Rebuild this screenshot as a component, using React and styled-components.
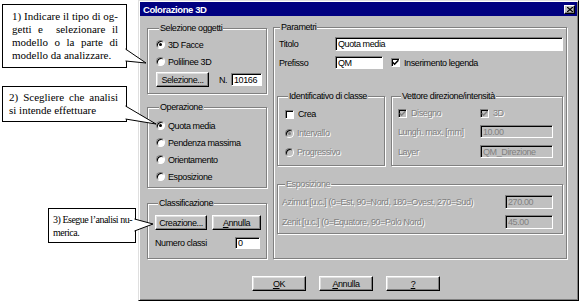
import React from 'react';
import styled, { createGlobalStyle } from 'styled-components';

const GlobalStyle = createGlobalStyle`
  html, body {
    margin: 0;
    padding: 0;
    background: #fff;
  }
  body {
    font-family: "Liberation Sans Narrow", "Arial Narrow", "Liberation Sans", Arial, sans-serif;
    font-size: 9px;
    letter-spacing: -0.4px;
    color: #000;
  }
`;

const Page = styled.div`
  display: flex;
  width: 579px;
  height: 303px;
  overflow: hidden;
  background: #fff;
`;

/* ---------- callouts on the left ---------- */

const Notes = styled.div`
  width: 138px;
  flex-shrink: 0;
  display: flex;
  flex-direction: column;
  align-items: flex-start;
  padding-top: 4px;
  box-sizing: border-box;
`;

const Callout = styled.div`
  position: relative;
  box-sizing: border-box;
  width: ${p => p.$w}px;
  margin: ${p => p.$top}px 0 0 ${p => p.$left}px;
  padding: ${p => p.$pad};
  border: 1px solid #000;
  background: #fff;
  font-family: "Liberation Serif", "Times New Roman", serif;
  font-size: ${p => p.$fs || 11}px;
  letter-spacing: ${p => p.$ls || 0}px;
  line-height: 13px;
  color: #000;
`;

const NoteLine = styled.div`
  white-space: nowrap;
  text-align: justify;
  text-align-last: ${p => (p.$last ? 'left' : 'justify')};
`;

const Wedge = styled.svg`
  position: absolute;
  left: calc(100% - 1px);
  top: ${p => p.$top}px;
  z-index: 5;
  overflow: visible;
`;

const Pointer = ({ top, b0, b1, tx, ty }) => (
  <Wedge $top={top} width={tx + 2} height={Math.max(b1, ty) + 2}>
    <polygon points={`0,${b0} ${tx},${ty} 0,${b1}`} fill="#fff" />
    <polyline
      points={`0.5,${b0} ${tx},${ty} 0.5,${b1}`}
      fill="none"
      stroke="#000"
      strokeWidth="1"
    />
  </Wedge>
);

/* ---------- dialog ---------- */

const Dialog = styled.div`
  width: 441px;
  height: 301px;
  box-sizing: border-box;
  flex-shrink: 0;
  background: #c0c0c0;
  border: 1px solid;
  border-color: #dfdfdf #000 #000 #dfdfdf;
  box-shadow: inset 1px 1px #fff, inset -1px -1px #808080;
  padding: 1px;
  display: flex;
  flex-direction: column;
`;

const TitleBar = styled.div`
  height: 14px;
  background: #000080;
  color: #fff;
  font-weight: bold;
  font-size: 9.5px;
  display: flex;
  align-items: center;
  justify-content: space-between;
  padding: 0 2px 0 3px;
`;

const CloseBox = styled.span`
  width: 11px;
  height: 9px;
  box-sizing: border-box;
  background: #c0c0c0;
  border: 1px solid;
  border-color: #fff #000 #000 #fff;
  box-shadow: inset -1px -1px #808080;
  display: flex;
  align-items: center;
  justify-content: center;
`;

const Body = styled.div`
  display: flex;
  align-items: flex-start;
  gap: 6px;
  padding: 6px 0 0 7px;
`;

const Column = styled.div`
  display: flex;
  flex-direction: column;
  width: ${p => p.$w}px;
  margin-top: ${p => p.$mt || 0}px;
`;

const Group = styled.fieldset`
  box-sizing: border-box;
  margin: ${p => p.$mt || 0}px 0 0 0;
  padding: ${p => p.$pad};
  min-width: 0;
  width: ${p => (p.$w ? `${p.$w}px` : 'auto')};
  height: ${p => p.$h}px;
  border: 1px solid #808080;
  box-shadow: inset 1px 1px #fff, 1px 1px #fff;
  display: flex;
  flex-direction: column;
`;

const Legend = styled.legend`
  padding: 0 1px;
  margin-left: 3px;
  line-height: 10px;
  white-space: nowrap;
  background: #c0c0c0;
  color: ${p => (p.$off ? '#808080' : '#000')};
  text-shadow: ${p => (p.$off ? '1px 1px 0 #fff' : 'none')};
`;

const Row = styled.div`
  display: flex;
  align-items: center;
  height: ${p => p.$h || 14}px;
  margin-top: ${p => p.$mt || 0}px;
  gap: ${p => p.$gap || 0}px;
`;

const SplitRow = styled.div`
  display: flex;
  gap: 6px;
  margin-top: ${p => p.$mt || 0}px;
`;

const Label = styled.span`
  display: inline-block;
  white-space: nowrap;
  width: ${p => (p.$w ? `${p.$w}px` : 'auto')};
  flex: ${p => (p.$grow ? 1 : 'none')};
  padding-left: ${p => p.$pl || 0}px;
  margin-left: ${p => p.$ml || 0}px;
  box-sizing: border-box;
  color: ${p => (p.$off ? '#808080' : '#000')};
  text-shadow: ${p => (p.$off ? '1px 1px 0 #fff' : 'none')};
`;

const Field = styled.input`
  box-sizing: border-box;
  width: ${p => p.$w}px;
  height: ${p => p.$h || 14}px;
  margin: 0;
  padding: 0 0 0 2px;
  font: inherit;
  letter-spacing: inherit;
  color: ${p => (p.$off ? '#808080' : '#000')};
  background: ${p => (p.$off ? '#c0c0c0' : '#fff')};
  border: 1px solid;
  border-color: #808080 #fff #fff #808080;
  box-shadow: inset 1px 1px #000;
  outline: none;
`;

const Button = styled.button`
  box-sizing: border-box;
  width: ${p => p.$w}px;
  height: 15px;
  margin: 0;
  padding: 0;
  font: inherit;
  letter-spacing: inherit;
  color: #000;
  background: #c0c0c0;
  border: 1px solid;
  border-color: #fff #000 #000 #fff;
  box-shadow: inset -1px -1px #808080, inset 1px 1px #dfdfdf;
`;

const RadioMark = styled.span`
  position: relative;
  width: 9px;
  height: 9px;
  flex: none;
  box-sizing: border-box;
  border-radius: 50%;
  background: ${p => (p.$off ? '#c0c0c0' : '#fff')};
  border: 1px solid;
  border-color: #808080 #fff #fff #808080;
  box-shadow: inset 1px 1px #000;
  margin-right: 3px;
  &::after {
    content: '';
    display: ${p => (p.$on ? 'block' : 'none')};
    position: absolute;
    left: 2px;
    top: 2px;
    width: 3px;
    height: 3px;
    border-radius: 50%;
    background: ${p => (p.$off ? '#808080' : '#000')};
  }
`;

const BoxMark = styled.span`
  width: 9px;
  height: 9px;
  flex: none;
  box-sizing: border-box;
  background: ${p => (p.$off ? '#c0c0c0' : '#fff')};
  border: 1px solid;
  border-color: #808080 #fff #fff #808080;
  box-shadow: inset 1px 1px #000;
  display: flex;
  align-items: center;
  justify-content: center;
  margin-left: ${p => p.$ml || 0}px;
  margin-right: 4px;
`;

const Footer = styled.div`
  display: flex;
  gap: 13px;
  margin-top: 17px;
  padding-left: 112px;
`;

const Radio = ({ on, off, children }) => (
  <Row $h={17}>
    <RadioMark $on={on} $off={off} />
    <Label $off={off}>{children}</Label>
  </Row>
);

const CheckBox = ({ on, off, ml }) => (
  <BoxMark $off={off} $ml={ml}>
    {on && (
      <svg width="7" height="7" viewBox="0 0 7 7">
        <path
          d="M0.7 3.2 L2.6 5.2 L6.4 1.2"
          fill="none"
          stroke={off ? '#808080' : '#000'}
          strokeWidth="1.5"
        />
      </svg>
    )}
  </BoxMark>
);

export default function App() {
  return (
    <>
      <GlobalStyle />
      <Page>
        <Notes>
          <Callout $w={125} $top={0} $left={2} $pad="5px 8px 5px 9px">
            <NoteLine>1) Indicare il tipo di og-</NoteLine>
            <NoteLine>getti e&nbsp; selezionare il</NoteLine>
            <NoteLine>modello o la parte di</NoteLine>
            <NoteLine $last>modello da analizzare.</NoteLine>
            <Pointer top={40} b0={4} b1={16} tx={21} ty={18} />
          </Callout>
          <Callout $w={125} $top={18} $left={2} $pad="4px 8px 4px 6px">
            <NoteLine>2) Scegliere che analisi</NoteLine>
            <NoteLine $last>si intende effettuare</NoteLine>
            <Pointer top={15} b0={4} b1={17} tx={31} ty={22} />
          </Callout>
          <Callout $w={88} $top={86} $left={48} $pad="4px 3px 3px 4px" $fs={10} $ls={-0.5}>
            <NoteLine>3) Esegue l’analisi nu-</NoteLine>
            <NoteLine $last>merica.</NoteLine>
            <Pointer top={6} b0={4} b1={16} tx={19} ty={9} />
          </Callout>
        </Notes>

        <Dialog>
          <TitleBar>
            <span>Colorazione 3D</span>
            <CloseBox>
              <svg width="6" height="5" viewBox="0 0 6 5">
                <path d="M0 0 L6 5 M6 0 L0 5" stroke="#000" strokeWidth="1.3" />
              </svg>
            </CloseBox>
          </TitleBar>

          <Body>
            <Column $w={120} $mt={1}>
              <Group $h={71} $pad="3px 0 0 8px">
                <Legend>Selezione oggetti</Legend>
                <Radio on>3D Facce</Radio>
                <Radio>Polilinee 3D</Radio>
                <Row $h={15} $mt={2}>
                  <Button $w={53}>Selezione...</Button>
                  <Label $ml={10} $w={12}>N.</Label>
                  <Field $w={31} $h={13} readOnly value="10166" />
                </Row>
              </Group>

              <Group $mt={8} $h={86} $pad="5px 0 0 8px">
                <Legend>Operazione</Legend>
                <Radio on>Quota media</Radio>
                <Radio>Pendenza massima</Radio>
                <Radio>Orientamento</Radio>
                <Radio>Esposizione</Radio>
              </Group>

              <Group $mt={10} $h={61} $pad="7px 0 0 7px">
                <Legend>Classificazione</Legend>
                <Row $h={15} $gap={5}>
                  <Button $w={52}>Creazione...</Button>
                  <Button $w={49}><u>A</u>nnulla</Button>
                </Row>
                <Row $h={14} $mt={6}>
                  <Label $w={80}>Numero classi</Label>
                  <Field $w={25} $h={12} readOnly value="0" />
                </Row>
              </Group>
            </Column>

            <Group $w={294} $h={237} $pad="5px 3px 0 3px">
              <Legend>Parametri</Legend>
              <Row $h={14}>
                <Label $w={58} $pl={2}>Titolo</Label>
                <Field $w={228} $h={14} readOnly value="Quota media" />
              </Row>
              <Row $h={13} $mt={5}>
                <Label $w={58} $pl={2}>Prefisso</Label>
                <Field $w={48} $h={13} readOnly value="QM" />
                <CheckBox on ml={8} />
                <Label>Inserimento legenda</Label>
              </Row>

              <SplitRow $mt={22}>
                <Group $w={108} $h={75} $pad="6px 0 0 7px">
                  <Legend>Identificativo di classe</Legend>
                  <Row $h={14}>
                    <CheckBox />
                    <Label>Crea</Label>
                  </Row>
                  <Row $h={14} $mt={5}>
                    <RadioMark $on $off />
                    <Label $off>Intervallo</Label>
                  </Row>
                  <Row $h={14} $mt={5}>
                    <RadioMark $off />
                    <Label $off>Progressivo</Label>
                  </Row>
                </Group>

                <Group $w={172} $h={75} $pad="5px 0 0 6px">
                  <Legend>Vettore direzione/intensità</Legend>
                  <Row $h={14}>
                    <CheckBox on off />
                    <Label $off $w={69}>Disegno</Label>
                    <CheckBox on off />
                    <Label $off>3D</Label>
                  </Row>
                  <Row $h={13} $mt={5}>
                    <Label $off $w={82}>Lungh. max. [mm]</Label>
                    <Field $off $w={73} $h={13} readOnly value="10.00" />
                  </Row>
                  <Row $h={13} $mt={7}>
                    <Label $off $w={82}>Layer</Label>
                    <Field $off $w={73} $h={13} readOnly value="QM_Direzione" />
                  </Row>
                </Group>
              </SplitRow>

              <Group $mt={13} $h={55} $pad="6px 9px 0 4px">
                <Legend $off>Esposizione</Legend>
                <Row $h={14}>
                  <Label $off $grow>Azimut [u.c.] (0=Est, 90=Nord, 180=Ovest, 270=Sud)</Label>
                  <Field $off $w={48} $h={14} readOnly value="270.00" />
                </Row>
                <Row $h={14} $mt={6}>
                  <Label $off $grow>Zenit [u.c.] (0=Equatore, 90=Polo Nord)</Label>
                  <Field $off $w={48} $h={14} readOnly value="45.00" />
                </Row>
              </Group>
            </Group>
          </Body>

          <Footer>
            <Button $w={54}><u>O</u>K</Button>
            <Button $w={54}><u>A</u>nnulla</Button>
            <Button $w={54}><u>?</u></Button>
          </Footer>
        </Dialog>
      </Page>
    </>
  );
}
